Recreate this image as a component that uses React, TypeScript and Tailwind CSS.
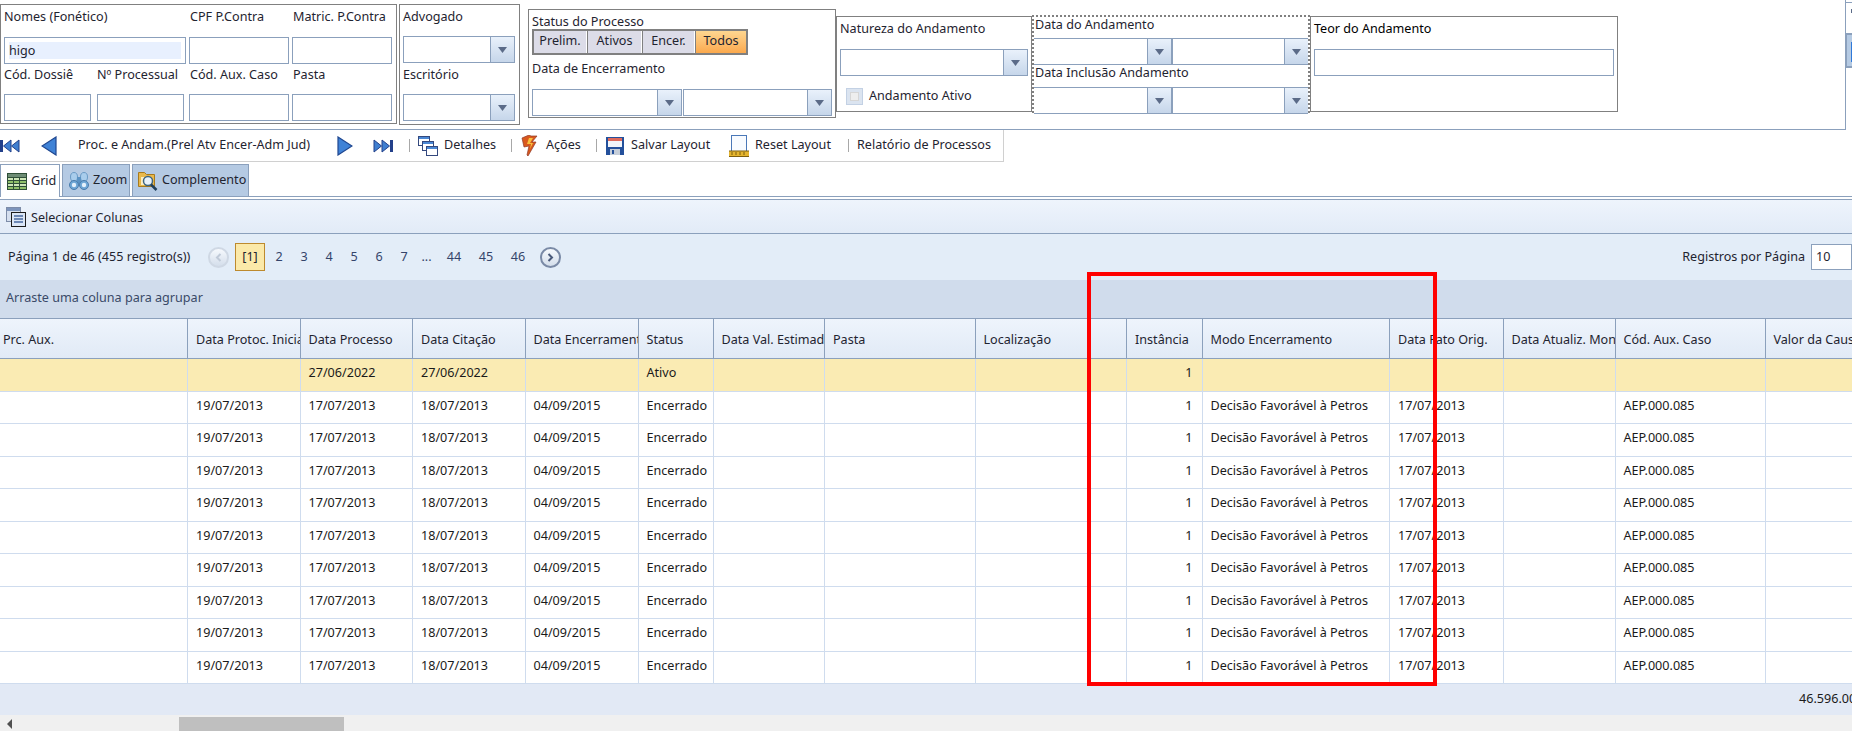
import React from "react";

const font = "font-['Noto_Sans',sans-serif]";
const gridCols =
  "grid grid-cols-[188px_112.5px_112.5px_112.5px_113px_75px_111.5px_150.5px_151.5px_75.5px_187.5px_113.5px_112px_150px_150px]";

const headers = [
  "Prc. Aux.",
  "Data Protoc. Inicial",
  "Data Processo",
  "Data Citação",
  "Data Encerramento",
  "Status",
  "Data Val. Estimada",
  "Pasta",
  "Localização",
  "Instância",
  "Modo Encerramento",
  "Data Fato Orig.",
  "Data Atualiz. Monet.",
  "Cód. Aux. Caso",
  "Valor da Causa",
];

const firstRow = ["", "", "27/06/2022", "27/06/2022", "", "Ativo", "", "", "", "1", "", "", "", "", ""];
const closedRow = [
  "",
  "19/07/2013",
  "17/07/2013",
  "18/07/2013",
  "04/09/2015",
  "Encerrado",
  "",
  "",
  "",
  "1",
  "Decisão Favorável à Petros",
  "17/07/2013",
  "",
  "AEP.000.085",
  "",
];
const rows = [firstRow, ...Array.from({ length: 9 }, () => closedRow)];

function Field({ className = "", children }: { className?: string; children?: React.ReactNode }) {
  return <div className={`h-[27px] border border-[#8ba0bc] bg-white ${className}`}>{children}</div>;
}

function Select({ className = "" }: { className?: string }) {
  return (
    <div className={`h-[27px] flex border border-[#8ba0bc] bg-white ${className}`}>
      <div className="flex-1" />
      <div className="w-[24px] flex items-center justify-center border-l border-[#8ba0bc] bg-gradient-to-b from-[#e9f1fb] to-[#c6d6ea]">
        <svg width="9" height="6" viewBox="0 0 9 6">
          <path d="M0 0h9L4.500 6z" fill="#5b6b88" />
        </svg>
      </div>
    </div>
  );
}

function Separator() {
  return <div className="w-px h-[13px] bg-[#a8a8a8]" />;
}

function SkipIcon({ flip }: { flip?: boolean }) {
  return (
    <svg width="21" height="14" viewBox="0 0 21 14" className={flip ? "rotate-180" : ""}>
      <path d="M0 1h3v12H0z" fill="#23408a" />
      <path d="M11 1v12L3.500 7z" fill="#3f7fd0" stroke="#23408a" />
      <path d="M19 1v12l-7.500-6z" fill="#3f7fd0" stroke="#23408a" />
    </svg>
  );
}

function ArrowIcon({ flip }: { flip?: boolean }) {
  return (
    <svg width="16" height="20" viewBox="0 0 16 20" className={flip ? "rotate-180" : ""}>
      <path d="M15 1v18L1 10z" fill="#3f82d6" stroke="#1f4790" strokeWidth="1.200" />
    </svg>
  );
}

function WindowsIcon() {
  return (
    <svg width="20" height="20" viewBox="0 0 20 20">
      <g fill="#fff" stroke="#34497e">
        <rect x="0.500" y="0.500" width="11" height="9" />
        <rect x="4.500" y="5.500" width="11" height="9" />
        <rect x="8.500" y="10.500" width="11" height="9" />
      </g>
      <path d="M1 1h10v2H1zM5 6h10v2H5zM9 11h10v2H9z" fill="#4a87d4" />
    </svg>
  );
}

function BoltIcon() {
  return (
    <svg width="17" height="21" viewBox="0 0 17 21">
      <path d="M1 3l7-3 2 1 6 0-5 6 4 0-8 14-1-1 2-9-5 1z" fill="#d9581d" stroke="#8d3a2a" strokeWidth="0.700" />
      <path d="M8 3h4l-3 5h3l-3 6 1-5H6z" fill="#f7c23e" />
    </svg>
  );
}

function FloppyIcon() {
  return (
    <svg width="18" height="18" viewBox="0 0 18 18">
      <path d="M0 0h18v18H0z" fill="#24509b" />
      <path d="M2 1h14v3H2z" fill="#de6a5c" />
      <path d="M2 4h14v6H2z" fill="#f2f5fa" />
      <path d="M4 12h10v6H4z" fill="#c6ced9" />
      <path d="M6 13h2v4H6z" fill="#24509b" />
    </svg>
  );
}

function RulerIcon() {
  return (
    <svg width="20" height="22" viewBox="0 0 20 22">
      <rect x="2.500" y="0.500" width="15" height="16" fill="#f8fbff" stroke="#4a78b8" />
      <path d="M0 16h20v6H0z" fill="#e5b52f" />
      <path d="M0 16h20M3 17v3M7 17v3M11 17v3M15 17v3M0 21.500h20" stroke="#7d5e10" fill="none" />
    </svg>
  );
}

function GridIcon() {
  return (
    <svg width="20" height="17" viewBox="0 0 20 17">
      <path d="M0 0h20v17H0z" fill="#2f4f38" />
      <path d="M1 1h18v3H1z" fill="#6d8c74" />
      <path d="M1 5h5v2H1zM7 5h5v2H7zM13 5h6v2h-6zM1 11h5v2H1zM7 11h5v2H7zM13 11h6v2h-6z" fill="#cfe7b9" />
      <path d="M1 8h5v2H1zM7 8h5v2H7zM13 8h6v2h-6zM1 14h5v2H1zM7 14h5v2H7zM13 14h6v2h-6z" fill="#8fc06a" />
    </svg>
  );
}

function BinocularsIcon() {
  return (
    <svg width="20" height="20" viewBox="0 0 20 20">
      <ellipse cx="5" cy="6" rx="3.500" ry="4.500" fill="#a9cdec" stroke="#6b9bc6" />
      <ellipse cx="15" cy="6" rx="3.500" ry="4.500" fill="#a9cdec" stroke="#6b9bc6" />
      <path d="M8 6h4v7H8z" fill="#5c93c4" />
      <circle cx="5" cy="14" r="4.500" fill="#6ea6d6" stroke="#4b7cab" />
      <circle cx="15" cy="14" r="4.500" fill="#6ea6d6" stroke="#4b7cab" />
      <circle cx="5" cy="14" r="2.200" fill="#e4f0fb" />
      <circle cx="15" cy="14" r="2.200" fill="#e4f0fb" />
    </svg>
  );
}

function FolderSearchIcon() {
  return (
    <svg width="20" height="20" viewBox="0 0 20 20">
      <path d="M0.500 1.500h6l2 2h8v12h-16z" fill="#e9b94c" stroke="#a87a1c" />
      <path d="M3 6h11v8H3z" fill="#fbeec4" />
      <circle cx="10" cy="10" r="4.500" fill="#e8f2fb" stroke="#3d6480" strokeWidth="1.500" />
      <path d="M13 13.500l5.500 5.500" stroke="#1f3f5a" strokeWidth="2.500" />
    </svg>
  );
}

function ColumnsIcon() {
  return (
    <svg width="20" height="20" viewBox="0 0 20 20">
      <rect x="0.500" y="0.500" width="14" height="14" fill="#d5dfef" stroke="#7d8ca8" />
      <path d="M1 1h13v3H1z" fill="#7d94bb" />
      <rect x="5.500" y="5.500" width="14" height="14" fill="#dbe6f6" stroke="#1c1c1c" />
      <path d="M8 9h9M8 12h9M8 15h9" stroke="#4a6aa0" strokeWidth="1.500" />
    </svg>
  );
}

function PagerCircle({ next }: { next?: boolean }) {
  return (
    <div
      className={`w-[21px] h-[21px] rounded-full border-2 flex items-center justify-center bg-gradient-to-b from-[#f6f9fd] to-[#d4deeb] ${
        next ? "border-[#7a8aa6]" : "border-[#cfd8e4]"
      }`}
    >
      <svg width="7" height="9" viewBox="0 0 7 9" className={next ? "" : "rotate-180"}>
        <path d="M1.500 1l3.500 3.500L1.500 8" fill="none" stroke={next ? "#4a5a7a" : "#c0cad8"} strokeWidth="2" />
      </svg>
    </div>
  );
}

function Bordered({ className, children }: { className: string; children: React.ReactNode }) {
  return <div className={`border border-[#808080] ${className}`}>{children}</div>;
}

export default function App() {
  return (
    <div className={`relative w-[1852px] h-[731px] overflow-hidden bg-white text-[12.6px] leading-none text-[#1f2430] ${font}`}>
      {/* filter panel */}
      <div className="h-[130px] w-[1846px] flex items-start border-b border-r border-[#8ba0bc]">
        <Bordered className="mt-[4px] w-[397px] h-[120px]">
          <div className="grid grid-cols-[93px_92px_103px_1fr] px-[3px]">
            <div className="col-span-2 h-[32px] pb-[8px] flex items-center">Nomes (Fonético)</div>
            <div className="h-[32px] pb-[8px] pl-px flex items-center">CPF P.Contra</div>
            <div className="h-[32px] pb-[8px] pl-px flex items-center">Matric. P.Contra</div>
            <div className="col-span-2">
              <Field className="p-[4px] w-[182px]">
                <div className="h-full pt-[1px] bg-[#e8f0fe] flex items-center">higo</div>
              </Field>
            </div>
            <Field className="w-[100px]" />
            <Field className="w-[100px]" />
            <div className="h-[30px] pb-[8px] flex items-center">Cód. Dossiê</div>
            <div className="h-[30px] pb-[8px] flex items-center">Nº Processual</div>
            <div className="h-[30px] pb-[8px] pl-px flex items-center">Cód. Aux. Caso</div>
            <div className="h-[30px] pb-[8px] pl-px flex items-center">Pasta</div>
            <Field className="w-[87px]" />
            <Field className="w-[87px]" />
            <Field className="w-[100px]" />
            <Field className="w-[100px]" />
          </div>
        </Bordered>
        <Bordered className="mt-[4px] ml-[2px] w-[121px] h-[121px] px-[3px]">
          <div className="h-[31px] pb-[7px] flex items-center">Advogado</div>
          <Select className="w-[112px]" />
          <div className="h-[31px] pb-[7px] flex items-center">Escritório</div>
          <Select className="w-[112px]" />
        </Bordered>
        <Bordered className="mt-[9px] ml-[8px] w-[308px] h-[109px] px-[3px]">
          <div className="h-[19px] flex items-end">Status do Processo</div>
          <div className="w-[216px] h-[26px] flex gap-px border-2 border-[#808080] bg-[#808080]">
            <div className="w-[53px] pb-[2px] flex items-center justify-center border-r border-white bg-[#dcdce8]">Prelim.</div>
            <div className="w-[54px] pb-[2px] flex items-center justify-center border-r border-white bg-[#dcdce8]">Ativos</div>
            <div className="w-[52px] pb-[2px] flex items-center justify-center border-r border-white bg-[#dcdce8]">Encer.</div>
            <div className="flex-1 pb-[2px] flex items-center justify-center bg-gradient-to-b from-[#fdd690] to-[#fba94d]">Todos</div>
          </div>
          <div className="h-[26px] pt-[2px] flex items-center">Data de Encerramento</div>
          <div className="mt-[8px] flex gap-px">
            <Select className="w-[150px]" />
            <Select className="w-[149px]" />
          </div>
        </Bordered>
        <Bordered className="mt-[16px] w-[196px] h-[96px] px-[3px]">
          <div className="h-[32px] pb-[8px] flex items-center">Natureza do Andamento</div>
          <Select className="w-[188px]" />
          <div className="mt-[12px] ml-[6px] flex items-center gap-[6px]">
            <div className="w-[17px] h-[17px] p-[3px] border border-[#c3d1e4] bg-[#dbe4f0]">
              <div className="h-full bg-[#eeeeee] border border-[#d6d6d6]" />
            </div>
            Andamento Ativo
          </div>
        </Bordered>
        <div className="mt-[15px] w-[278px] h-[98px] border-2 border-dotted border-[#808080]">
          <div className="h-[21px] pb-[4px] flex items-center pl-[1px]">Data do Andamento</div>
          <div className="flex">
            <Select className="w-[138px] border-l-0" />
            <Select className="flex-1 border-r-0" />
          </div>
          <div className="h-[22px] pb-[5px] flex items-center pl-[1px]">Data Inclusão Andamento</div>
          <div className="flex">
            <Select className="w-[138px] border-l-0" />
            <Select className="flex-1 border-r-0" />
          </div>
        </div>
        <Bordered className="mt-[16px] w-[308px] h-[96px] px-[3px] text-black">
          <div className="h-[32px] pb-[8px] flex items-center">Teor do Andamento</div>
          <Field className="w-[300px]" />
        </Bordered>
      </div>

      {/* toolbar */}
      <div className="h-[32px] w-[1004px] flex items-center border-b border-r border-[#d0d0d0]">
        <div className="w-[41px]">
          <SkipIcon />
        </div>
        <ArrowIcon />
        <span className="ml-[21px] w-[259px]">Proc. e Andam.(Prel Atv Encer-Adm Jud)</span>
        <ArrowIcon flip />
        <div className="ml-[19px] mr-[16px]">
          <SkipIcon flip />
        </div>
        <Separator />
        <div className="ml-[8px] mr-[6px]">
          <WindowsIcon />
        </div>
        <span className="w-[67px]">Detalhes</span>
        <Separator />
        <div className="ml-[9px] mr-[8px]">
          <BoltIcon />
        </div>
        <span className="w-[50px]">Ações</span>
        <Separator />
        <div className="ml-[9px] mr-[7px]">
          <FloppyIcon />
        </div>
        <span className="w-[98px]">Salvar Layout</span>
        <div className="mr-[6px]">
          <RulerIcon />
        </div>
        <span className="w-[93px]">Reset Layout</span>
        <Separator />
        <span className="ml-[8px]">Relatório de Processos</span>
      </div>

      {/* tabs */}
      <div className="h-[33px] mt-[2px] flex items-end gap-[2px] border-b border-[#8ba0bc]">
        <div className="relative -mb-px h-[33px] w-[60px] flex items-center gap-[4px] pl-[6px] border border-b-0 border-[#8ba0bc] bg-white">
          <GridIcon />
          Grid
        </div>
        <div className="h-[32px] w-[68px] flex items-center gap-[4px] pl-[6px] border border-b-0 border-[#8ba0bc] bg-[#b5cae3]">
          <BinocularsIcon />
          Zoom
        </div>
        <div className="h-[32px] w-[117px] flex items-center gap-[4px] pl-[5px] border border-b-0 border-[#8ba0bc] bg-[#b5cae3]">
          <FolderSearchIcon />
          Complemento
        </div>
      </div>

      {/* grid toolbar */}
      <div className="mt-[2px] h-[35px] flex items-center gap-[5px] pl-[6px] border-y border-y-[#8ba0bc] bg-gradient-to-b from-[#eef4fc] to-[#e2ebf7]">
        <ColumnsIcon />
        <span className="mt-[3px]">Selecionar Colunas</span>
      </div>

      {/* pager */}
      <div className="h-[46px] flex items-center justify-between bg-[#e3edf8]">
        <div className="flex items-center">
          <span className="ml-[8px] w-[200px]">Página 1 de 46 (455 registro(s))</span>
          <PagerCircle />
          <div className="ml-[6px] w-[30px] h-[28px] flex items-center justify-center border border-[#bd8a2e] bg-[#fbe9a9]">[1]</div>
          <div className="ml-[1.5px] flex items-center text-[#34446a]">
            <span className="w-[25px] text-center">2</span>
            <span className="w-[25px] text-center">3</span>
            <span className="w-[25px] text-center">4</span>
            <span className="w-[25px] text-center">5</span>
            <span className="w-[25px] text-center">6</span>
            <span className="w-[25px] text-center">7</span>
            <span className="w-[20px] text-center">...</span>
            <span className="w-[35px] text-center">44</span>
            <span className="w-[29px] text-center">45</span>
            <span className="w-[35px] text-center">46</span>
          </div>
          <div className="ml-[4.5px]">
            <PagerCircle next />
          </div>
        </div>
        <div className="flex items-center gap-[6px]">
          Registros por Página
          <div className="w-[41px] h-[26px] pl-[4px] flex items-center border border-[#8ba0bc] bg-white">10</div>
        </div>
      </div>

      {/* group panel */}
      <div className="h-[39px] pl-[6px] pb-px flex items-center border-b border-[#8ba0bc] bg-[#d0dcec] text-[#3a4a68]">
        Arraste uma coluna para agrupar
      </div>

      {/* data grid */}
      <div className="overflow-hidden">
        <div className={`${gridCols} h-[40px] border-b border-[#8ba0bc] bg-gradient-to-b from-[#eef4fc] to-[#e1eaf6]`}>
          {headers.map((h, i) => (
            <div
              key={h}
              className={`flex items-center overflow-hidden whitespace-nowrap border-r border-[#8ba0bc] pt-[3px] ${i === 0 ? "pl-[3px]" : "pl-[8px]"}`}
            >
              {h}
            </div>
          ))}
        </div>
        {rows.map((row, r) => (
          <div
            key={r}
            className={`${gridCols} h-[32.5px] border-b border-[#cfdcee] text-[#1a1a1a] ${r === 0 ? "bg-[#faebb3]" : "bg-white"}`}
          >
            {row.map((value, c) => (
              <div
                key={c}
                className={`flex items-center overflow-hidden whitespace-nowrap border-r border-[#cfdcee] pl-[8px] pb-[2px] ${
                  c === 9 ? "justify-end pr-[9px]" : ""
                }`}
              >
                {value}
              </div>
            ))}
          </div>
        ))}
        <div className={`${gridCols} h-[31px] bg-[#e2e9f5]`}>
          <div className="col-start-15 pl-[33.5px] flex items-center whitespace-nowrap text-[#1a1a1a]">46.596.00</div>
        </div>
      </div>

      {/* horizontal scrollbar */}
      <div className="h-[16px] flex items-end bg-[#f0f0f0]">
        <svg width="6" height="10" viewBox="0 0 6 10" className="ml-[7px] mb-[2px]">
          <path d="M5 0v10L0 5z" fill="#505050" />
        </svg>
        <div className="ml-[166px] w-[165px] h-[14px] bg-[#bfbfbf]" />
      </div>

      {/* clipped neighbouring panel at the right edge */}
      <div className="absolute left-[1845px] -top-px w-[7px] h-[4px] border-l border-b border-[#8ba0bc]" />
      <div className="absolute left-[1851px] top-[9px] w-px h-[4px] bg-[#5b6b88]" />
      <div className="absolute left-[1845px] top-[33px] w-[7px] h-[35px] border-y-2 border-l-2 border-[#8ba0bc] bg-[#b5cae3]">
        <div className="ml-[4px] mt-[7px] h-[20px] bg-[#2f79d9]" />
      </div>

      {/* red highlight drawn on top of the screenshot */}
      <div className="absolute left-[1087px] top-[272px] w-[350px] h-[414px] border-4 border-[#ff0000]" />
    </div>
  );
}
